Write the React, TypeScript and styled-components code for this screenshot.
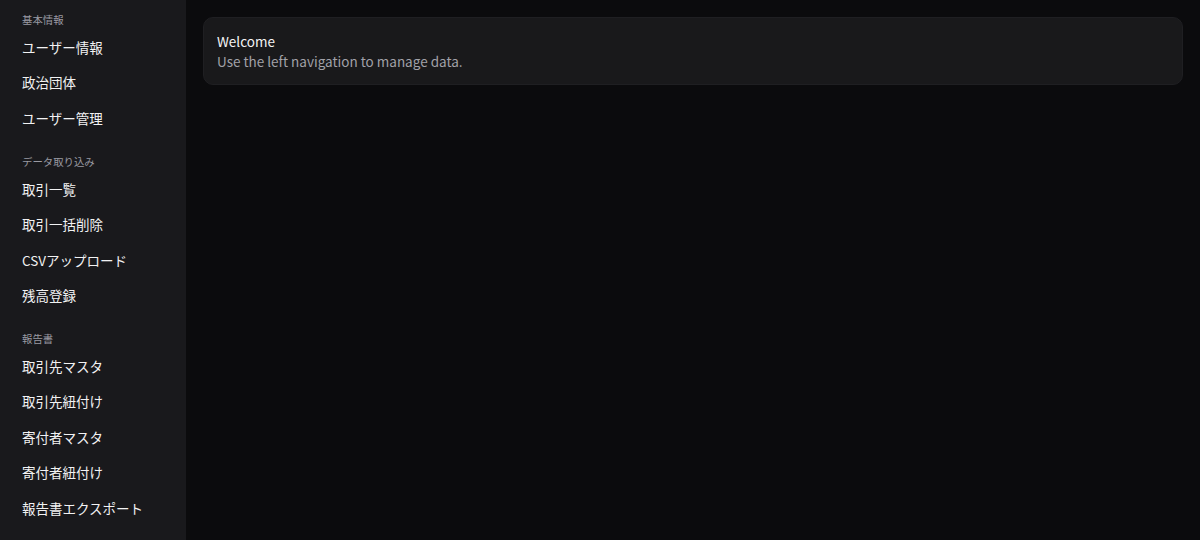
import styled, { createGlobalStyle } from 'styled-components';

const GlobalStyle = createGlobalStyle`
  html, body {
    margin: 0;
    padding: 0;
    height: 100%;
    background-color: #0b0b0d;
  }
  #root {
    height: 100%;
  }
  * {
    box-sizing: border-box;
  }
`;

const Layout = styled.div`
  display: flex;
  height: 100vh;
  font-family: 'Noto Sans CJK JP', 'Noto Sans', sans-serif;
  color: #f2f2f3;
`;

const Sidebar = styled.nav`
  width: 186px;
  flex-shrink: 0;
  background-color: #19191c;
  padding: 13px 0 0 22px;
  display: flex;
  flex-direction: column;
  gap: 18.6px;
`;

const Section = styled.div`
  display: flex;
  flex-direction: column;
`;

const SectionLabel = styled.div`
  font-size: 10.4px;
  line-height: 14px;
  color: #9a9aa2;
  margin-bottom: 3px;
`;

const NavItem = styled.a`
  display: block;
  font-size: 13.5px;
  line-height: 21.4px;
  padding: 7px 0;
  color: #f2f2f3;
  text-decoration: none;
  cursor: pointer;
`;

const Main = styled.main`
  flex: 1;
  padding: 17px 17px 0 17px;
`;

const Card = styled.div`
  background-color: #19191b;
  border: 1px solid #1f1f22;
  border-radius: 10px;
  padding: 13px 13px 13px;
`;

const CardTitle = styled.div`
  font-size: 13.5px;
  line-height: 20px;
  color: #f4f4f5;
`;

const CardText = styled.div`
  font-size: 13.5px;
  line-height: 20px;
  color: #a1a1a8;
`;

const sections = [
  { label: '基本情報', items: ['ユーザー情報', '政治団体', 'ユーザー管理'] },
  { label: 'データ取り込み', items: ['取引一覧', '取引一括削除', 'CSVアップロード', '残高登録'] },
  {
    label: '報告書',
    items: ['取引先マスタ', '取引先紐付け', '寄付者マスタ', '寄付者紐付け', '報告書エクスポート'],
  },
];

const App = () => {
  return (
    <>
      <GlobalStyle />
      <Layout>
        <Sidebar>
          {sections.map((section) => (
            <Section key={section.label}>
              <SectionLabel>{section.label}</SectionLabel>
              {section.items.map((item) => (
                <NavItem key={item}>{item}</NavItem>
              ))}
            </Section>
          ))}
        </Sidebar>
        <Main>
          <Card>
            <CardTitle>Welcome</CardTitle>
            <CardText>Use the left navigation to manage data.</CardText>
          </Card>
        </Main>
      </Layout>
    </>
  );
};

export default App;
